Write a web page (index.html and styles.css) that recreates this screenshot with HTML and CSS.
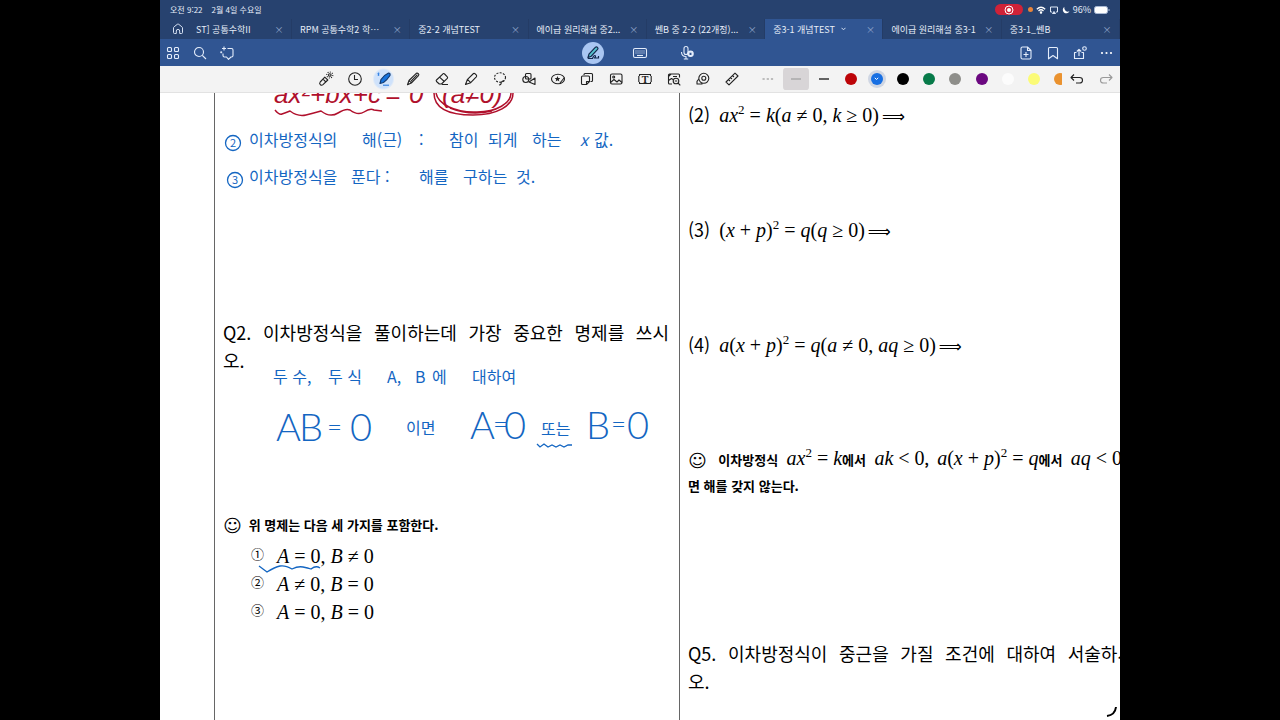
FILE: index.html
```html
<!DOCTYPE html>
<html lang="ko">
<head>
  <meta charset="utf-8">
  <title>중3-1 개념TEST</title>
  <link rel="stylesheet" href="styles.css">
</head>
<body>
<div class="screen">

  <header class="status">
    <span>오전 9:22</span>
    <span>2월 4일 수요일</span>
    <div class="status-right">
      <span class="rec"><svg width="10" height="10" viewBox="0 0 10 10"><circle cx="5" cy="5" r="4" fill="none" stroke="#fff"/><circle cx="5" cy="5" r="2" fill="#fff"/></svg></span>
      <span class="mic-dot"></span>
      <svg width="10" height="8" viewBox="0 0 10 8" fill="none" stroke="#fff" stroke-width="1.3"><path d="M.8 3.2Q5-.8 9.200 3.200M2.500 5Q5 2.600 7.500 5"/><circle cx="5" cy="6.600" r=".6" fill="#fff"/></svg>
      <svg width="10" height="8" viewBox="0 0 10 8" fill="none" stroke="#dfe8f7"><path d="M3 6H1.500V1H8.500V6H7"/><path d="M3.500 7.500L5 5.500L6.500 7.500z" fill="#dfe8f7"/></svg>
      <svg width="8" height="8" viewBox="0 0 8 8" fill="#fff"><path d="M2.500.8A3.500 3.500 0 1 0 7.500 5.200A3.600 3.600 0 0 1 2.500.8z"/></svg>
      <span>96%</span>
      <svg width="16" height="8" viewBox="0 0 16 8"><rect x=".5" y=".5" width="13" height="7" rx="2" fill="#fff" stroke="#a9b9d4"/><path d="M15 3v2" stroke="#a9b9d4"/></svg>
    </div>
  </header>

  <nav class="tabs">
    <button class="home" aria-label="홈"><svg width="12" height="12" viewBox="0 0 12 12" fill="none" stroke="#d5e0f2"><path d="M1.500 5Q1.500 4.300 2.100 3.800L5.300 1.300Q6 .8 6.700 1.300L9.900 3.800Q10.500 4.300 10.500 5V9.500Q10.500 10.500 9.500 10.500H7.700V8Q7.700 6.400 6 6.400Q4.300 6.400 4.300 8V10.500H2.500Q1.500 10.500 1.500 9.500z"/></svg></button>
    <div class="tab tab-cut"><button class="tab-name">ST] 공통수학II</button><button class="close" aria-label="닫기">×</button></div>
    <div class="tab"><button class="tab-name">RPM 공통수학2 학⋯</button><button class="close" aria-label="닫기">×</button></div>
    <div class="tab"><button class="tab-name">중2-2 개념TEST</button><button class="close" aria-label="닫기">×</button></div>
    <div class="tab"><button class="tab-name">에이급 원리해설 중2...</button><button class="close" aria-label="닫기">×</button></div>
    <div class="tab"><button class="tab-name">쎈B 중 2-2 (22개정)...</button><button class="close" aria-label="닫기">×</button></div>
    <div class="tab active"><button class="tab-name">중3-1 개념TEST <svg width="5" height="4" viewBox="0 0 5 4" fill="none" stroke="#d5e0f2"><path d="M.5.8L2.500 2.800L4.500.8"/></svg></button><button class="close" aria-label="닫기">×</button></div>
    <div class="tab"><button class="tab-name">에이급 원리해설 중3-1</button><button class="close" aria-label="닫기">×</button></div>
    <div class="tab"><button class="tab-name">중3-1_쎈B</button><button class="close" aria-label="닫기">×</button></div>
  </nav>

  <div class="navbar">
    <div class="nav-left">
      <button aria-label="페이지"><svg class="ico" viewBox="0 0 16 16"><rect x="2.500" y="2.500" width="4" height="4" rx="1"/><rect x="9.500" y="2.500" width="4" height="4" rx="1"/><rect x="2.500" y="9.500" width="4" height="4" rx="1"/><rect x="9.500" y="9.500" width="4" height="4" rx="1"/></svg></button>
      <button aria-label="검색"><svg class="ico" viewBox="0 0 16 16"><circle cx="7" cy="7" r="4.500"/><path d="M10.300 10.300L14 14"/></svg></button>
      <button aria-label="AI"><svg class="ico" viewBox="0 0 16 16"><path d="M8.500 3.500H12.500Q14 3.500 14 5V10.500Q14 12 12.500 12H12L9.500 14.300L7.500 12H5.500Q4 12 4 10.500V8.500M5 1.500V5.500M3 3.500H7M2.200 6.200V8.200M1.200 7.200H3.200"/></svg></button>
    </div>
    <div class="nav-mid">
      <button class="pen-mode" aria-label="필기"><svg width="16" height="16" viewBox="0 0 16 16" fill="none" stroke="#12294d" stroke-width="1.200"><path d="M3 12.500L4 9L10.500 2.200Q11.500 1.400 12.500 2.400Q13.500 3.400 12.600 4.400L6.200 11.200z" fill="#58c3cf"/><path d="M3 13.500H7.500Q9 9.500 10.500 11Q11 12 9 13H13.500V11"/></svg></button>
      <button aria-label="키보드"><svg class="ico" viewBox="0 0 16 16"><rect x="1.500" y="3.500" width="13" height="9" rx="1.500"/><path d="M3.500 6H12.500M3.500 8H12.500" stroke-dasharray="1 1"/><path d="M5 10.500H11"/></svg></button>
      <button aria-label="녹음"><svg class="ico" viewBox="0 0 16 16"><rect x="5" y="1.500" width="4" height="8" rx="2"/><path d="M2.500 7Q2.500 11.500 7 11.500V14M4.800 14H9.200"/><circle cx="11.500" cy="8.800" r="2.700" fill="#e4edfb"/><path d="M10.600 7.900L12.400 9.700M12.400 7.900L10.600 9.700" stroke="#305592"/></svg></button>
    </div>
    <div class="nav-right">
      <button aria-label="페이지 추가"><svg class="ico" viewBox="0 0 16 16"><path d="M4.500 2H9.500L13 5.500V12.500Q13 14 11.500 14H4.500Q3 14 3 12.500V3.500Q3 2 4.500 2zM9.500 2V5.500H13M8 7V12M5.500 9.500H10.500"/></svg></button>
      <button aria-label="책갈피"><svg class="ico" viewBox="0 0 16 16"><path d="M3.500 3.500Q3.500 2.500 4.500 2.500H11.500Q12.500 2.500 12.500 3.500V13.800L8 10.500L3.500 13.800z"/></svg></button>
      <button aria-label="공유"><svg class="ico" viewBox="0 0 16 16"><path d="M4.500 7.500H2.500V13.500H11.500V7.500H9.500M7 11V4.500M4.800 6.500L7 4.300L9.200 6.500"/><circle cx="12.500" cy="3.500" r="1.800"/></svg></button>
      <button aria-label="더보기"><svg width="16" height="16" viewBox="0 0 16 16" fill="#fff"><circle cx="3" cy="8" r="1.100"/><circle cx="7.500" cy="8" r="1.100"/><circle cx="12" cy="8" r="1.100"/></svg></button>
    </div>
  </div>

  <div class="toolbar">
    <div class="tools">
      <button aria-label="레이저"><svg class="ico" viewBox="0 0 16 16"><path d="M2.200 11L6.800 6.200L9.800 9L5 13.700Q3.600 14.900 2.300 13.600Q1 12.300 2.200 11zM5 8.200L7.900 11"/><circle cx="11.800" cy="4" r="1.300"/><circle cx="11.800" cy="4" r="3" stroke-dasharray="1 1.300"/></svg></button>
      <button aria-label="최근"><svg class="ico" viewBox="0 0 16 16"><circle cx="8" cy="8" r="6.300"/><path d="M7.500 4V8.500H11"/></svg></button>
      <button class="tool-on" aria-label="펜"><svg class="ico" viewBox="0 0 16 16"><path d="M4 12.500L5 8.500Q8 4 12.500 2Q14.500 2 14 4.500Q11.500 8.500 7.500 11.500z" fill="#1673dd" stroke="#123a70"/><path d="M2.500 1.500V5M1.500 2.500L3.500 4M3.500 2.300L1.500 4" stroke="#2a7be0" stroke-width=".8"/><path d="M7 14.200H13" stroke="#2a7be0"/></svg></button>
      <button aria-label="연필"><svg class="ico" viewBox="0 0 16 16"><path d="M2.500 13.800L4 9.500L11.300 2.300Q12.300 1.700 13.300 2.700Q14.300 3.700 13.500 4.700L6.300 12zM4 9.500L6.300 12M5.800 10.300L12.400 3.700"/></svg></button>
      <button aria-label="지우개"><svg class="ico" viewBox="0 0 16 16"><path d="M2.500 9L9 2.800Q9.800 2.200 10.600 3L13.300 5.800Q14 6.600 13.300 7.400L7.500 13H5.300L2.500 10.500Q1.800 9.700 2.500 9zM5.500 6.200L10.300 10.500M8 13.500H14"/></svg></button>
      <button aria-label="형광펜"><svg class="ico" viewBox="0 0 16 16"><path d="M2.500 13.500L4.500 8.300L10.500 2.500Q11.300 2 12.200 2.900L13.400 4.200Q14 5 13.300 5.800L7.700 11.700zM4.500 8.300L7.700 11.700M2.500 13.500L7.700 11.700"/></svg></button>
      <button aria-label="올가미"><svg class="ico" viewBox="0 0 16 16"><ellipse cx="8" cy="6.500" rx="5.500" ry="4.700" stroke-dasharray="2 1.300"/><path d="M12.500 9.500Q10 10 9 11.500Q9.800 13.500 7 14"/></svg></button>
      <button aria-label="도형"><svg class="ico" viewBox="0 0 16 16"><circle cx="4.800" cy="8.500" r="3"/><rect x="4.500" y="2.500" width="5.500" height="5.500" rx="1"/><path d="M8 11L14 7V13.500z"/></svg></button>
      <button aria-label="스티커"><svg class="ico" viewBox="0 0 16 16"><ellipse cx="8" cy="8" rx="6.500" ry="4.800"/><path d="M7.500 5L8.300 7L10.300 7.100L8.800 8.400L9.300 10.400L7.500 9.300L5.700 10.400L6.200 8.400L4.700 7.100L6.700 7z" fill="#222" stroke="none"/><path d="M10 12L14.500 6.500" /></svg></button>
      <button aria-label="포스트잇"><svg class="ico" viewBox="0 0 16 16"><path d="M5 4V3.500Q5 2.500 6 2.500H12.500Q13.500 2.500 13.500 3.500V9.500Q13.500 10.500 12.500 10.500H11.500M3.500 5H9.500Q10.500 5 10.500 6V10.500L7.500 13.500H3.500Q2.500 13.500 2.500 12.500V6Q2.500 5 3.500 5zM10.500 10.500H7.500V13.500"/></svg></button>
      <button aria-label="사진"><svg class="ico" viewBox="0 0 16 16"><rect x="2.500" y="3" width="11.500" height="10" rx="1.500"/><circle cx="5.700" cy="6" r="1"/><path d="M2.500 11.500L6 8.500L9 11L11 9L14 11.500"/></svg></button>
      <button aria-label="텍스트"><svg class="ico" viewBox="0 0 16 16"><path d="M2.500 5V3.500H13.500V5M2.500 11V12.500H13.500V11M1.800 5V11M14.200 5V11"/><text class="ico-t" x="8" y="11.500">T</text></svg></button>
      <button aria-label="이미지 검색"><svg class="ico" viewBox="0 0 16 16"><path d="M6 13H3.500Q2.500 13 2.500 12V4Q2.500 3 3.500 3H12.500Q13.500 3 13.500 4V6.500M2.500 9.500L5.500 7.500L7 8.500M2.500 5.500L5 3M7 5.500H11"/><circle cx="10" cy="10" r="2.800"/><path d="M12 12L14.300 14.300M8.800 10H11.200"/></svg></button>
      <button aria-label="테이프"><svg class="ico" viewBox="0 0 16 16"><circle cx="8.800" cy="7.300" r="5"/><circle cx="8.800" cy="7.300" r="2"/><path d="M3.800 8L2 10.300V13H7V12"/></svg></button>
      <button aria-label="자"><svg class="ico" viewBox="0 0 16 16"><path d="M2 11L11 2.200L14 5L5 13.800zM4.500 8.600L6 10M6.500 6.600L8 8M8.500 4.600L10 6"/></svg></button>
    </div>
    <div class="palette">
      <button aria-label="점선"><svg class="ico" viewBox="0 0 16 16"><path d="M2.500 8H13.500" stroke="#888" stroke-dasharray="2.200 2"/></svg></button>
      <button class="stroke-on" aria-label="얇은 선"><svg class="ico" viewBox="0 0 16 16"><path d="M3 8H13" stroke="#999"/></svg></button>
      <button aria-label="굵은 선"><svg class="ico" viewBox="0 0 16 16"><path d="M3 8H13" stroke="#333" stroke-width="1.500"/></svg></button>
      <button aria-label="빨강"><i class="swatch red"></i></button>
      <button aria-label="파랑"><i class="swatch blue"><svg width="5" height="4" viewBox="0 0 5 4" fill="none" stroke="#fff"><path d="M.8.8L2.500 2.500L4.200.8"/></svg></i></button>
      <button aria-label="검정"><i class="swatch black"></i></button>
      <button aria-label="초록"><i class="swatch green"></i></button>
      <button aria-label="회색"><i class="swatch gray"></i></button>
      <button aria-label="보라"><i class="swatch purple"></i></button>
      <button aria-label="흰색"><i class="swatch white"></i></button>
      <button aria-label="노랑"><i class="swatch yellow"></i></button>
    </div>
    <button class="half" aria-label="주황"><i class="swatch orange"></i></button>
    <div class="history">
      <button aria-label="실행 취소"><svg class="ico" viewBox="0 0 16 16"><path d="M5 3.500L2 6.500L5 9.500M2.300 6.500H10.500Q13.500 6.500 13.500 9.200Q13.500 12 10.500 12H7"/></svg></button>
      <button aria-label="다시 실행"><svg class="ico dim" viewBox="0 0 16 16"><path d="M11 3.500L14 6.500L11 9.500M13.700 6.500H5.500Q2.500 6.500 2.500 9.200Q2.500 12 5.500 12H9"/></svg></button>
    </div>
  </div>

  <main class="doc">
    <div class="gutter"></div>
    <section class="col col-left">
      <p class="question"><span class="full">Q2. 이차방정식을 풀이하는데 가장 중요한 명제를 쓰시</span>오.</p>
      <p class="note note-left"><span class="smile">☺</span> 위 명제는 다음 세 가지를 포함한다.</p>
      <ul class="cases">
        <li><span class="num">①</span><span class="math"><i>A</i><b>=</b>0, <i>B</i><b>≠</b>0</span></li>
        <li><span class="num">②</span><span class="math"><i>A</i><b>≠</b>0, <i>B</i><b>=</b>0</span></li>
        <li><span class="num">③</span><span class="math"><i>A</i><b>=</b>0, <i>B</i><b>=</b>0</span></li>
      </ul>
    </section>
    <section class="col col-right">
      <p class="item">(2) <span class="math"><i>ax</i><sup>2</sup><b>=</b><i>k</i>(<i>a</i><b>≠</b>0, <i>k</i><b>≥</b>0)<em>⟹</em></span></p>
      <p class="item">(3) <span class="math">(<i>x</i><b>+</b><i>p</i>)<sup>2</sup><b>=</b><i>q</i>(<i>q</i><b>≥</b>0)<em>⟹</em></span></p>
      <p class="item">(4) <span class="math"><i>a</i>(<i>x</i><b>+</b><i>p</i>)<sup>2</sup><b>=</b><i>q</i>(<i>a</i><b>≠</b>0, <i>aq</i><b>≥</b>0)<em>⟹</em></span></p>
      <p class="note note-right"><span class="full"><span class="smile">☺</span> 이차방정식 <span class="math"><i>ax</i><sup>2</sup><b>=</b><i>k</i></span>에서 <span class="math"><i>ak</i><b>&lt;</b>0</span>, <span class="math"><i>a</i>(<i>x</i><b>+</b><i>p</i>)<sup>2</sup><b>=</b><i>q</i></span>에서 <span class="math"><i>aq</i><b>&lt;</b>0</span>이</span>면 해를 갖지 않는다.</p>
      <p class="question"><span class="full">Q5. 이차방정식이 중근을 가질 조건에 대하여 서술하시</span>오.</p>
    </section>

    <!-- pen strokes and handwriting on top of the page -->
    <svg class="ink" width="984" height="627" viewBox="160 93 984 627">
      <g class="red-ink">
        <text x="274" y="103">ax²+bx+c</text>
        <text x="385" y="103">=</text>
        <text x="409" y="103">0</text>
        <text x="442" y="103">(a≠0)</text>
        <path d="M275 110Q279 115 282 114T290 111Q298 117 306 115T321 111Q330 118 338 113T350 110Q358 116 364 112T374 110L382 111"/>
        <path d="M434 93C434 108 448 115 473 115C497 115 513 106 513 93M436 93C438 104 455 113 477 112C497 112 511 103 511 93M450 108Q470 116 492 111" stroke-width="1.500"/>
      </g>
      <g class="blue-ink">
        <circle cx="233" cy="143" r="7.500"/><text class="tiny" x="233" y="147">2</text>
        <text x="249" y="146">이차방정식의</text>
        <text x="362" y="146">해(근)</text>
        <text x="419" y="146">:</text>
        <text x="449" y="146">참이</text>
        <text x="488" y="146">되게</text>
        <text x="532" y="146">하는</text>
        <text class="var" x="580" y="146">x</text>
        <text x="594" y="146">값.</text>
        <circle cx="235" cy="180" r="7.500"/><text class="tiny" x="235" y="184">3</text>
        <text x="249" y="183">이차방정식을</text>
        <text x="351" y="183">푼다 :</text>
        <text x="419" y="183">해를</text>
        <text x="463" y="183">구하는</text>
        <text x="516" y="183">것.</text>
        <text x="273" y="383">두 수,</text>
        <text x="328" y="383">두 식</text>
        <text x="387" y="383">A,</text>
        <text x="415" y="383">B</text>
        <text x="432" y="383">에</text>
        <text x="472" y="383">대하여</text>
        <text class="big" x="276" y="441">A</text>
        <text class="big" x="299" y="441">B</text>
        <text class="eq" x="327" y="436">=</text>
        <text class="big" x="350" y="441">0</text>
        <text x="406" y="434">이면</text>
        <text class="big" x="470" y="439">A</text>
        <text class="eq" x="493" y="433">=</text>
        <text class="big" x="504" y="439">0</text>
        <text x="541" y="435">또는</text>
        <text class="big" x="586" y="439">B</text>
        <text class="eq" x="611" y="433">=</text>
        <text class="big" x="627" y="439">0</text>
        <path d="M537 444L540 447L544 444L548 447L552 445L556 447L560 445L564 447L568 445L572 445"/>
        <path d="M259 566L267 572Q275 567 280 566T292 569Q298 566 303 567T311 569Q316 565 320 568"/>
      </g>
      <path d="M1116 707Q1115 715 1107 716" fill="none" stroke="#000" stroke-width="2"/>
    </svg>
  </main>
</div>
</body>
</html>
```

FILE: styles.css
```css
* {
  box-sizing: border-box;
}
body {
  margin: 0;
  background: #000;
  font-family: "Noto Sans CJK KR", "Noto Sans", sans-serif;
}
button {
  display: flex;
  align-items: center;
  justify-content: center;
  padding: 0;
  border: 0;
  background: none;
  color: inherit;
  font: inherit;
}
p, ul {
  margin: 0;
  padding: 0;
}
svg {
  flex: none;
}
.screen {
  display: flex;
  flex-direction: column;
  width: 75%;
  height: 100vh;
  margin: 0 auto;
  overflow: hidden;
  background: #fff;
}

/* status bar */
.status {
  display: flex;
  align-items: center;
  flex: none;
  gap: 9px;
  height: 19px;
  padding: 0 10px;
  background: #27426f;
  color: #e6edf8;
  font-size: 8px;
}
.status-right {
  display: flex;
  align-items: center;
  gap: 3px;
  margin-left: auto;
  font-size: 9px;
}
.rec {
  display: flex;
  align-items: center;
  justify-content: center;
  width: 28px;
  height: 11px;
  margin-right: 2px;
  border-radius: 6px;
  background: #cf2238;
}
.mic-dot {
  width: 5px;
  height: 5px;
  border-radius: 50%;
  background: #e8843a;
}

/* document tabs */
.tabs {
  display: flex;
  flex: none;
  height: 20px;
  background: #27426f;
  color: #e6edf8;
  font-size: 9px;
}
.home {
  width: 36px;
}
.tab {
  display: flex;
  align-items: center;
  justify-content: space-between;
  flex: 1;
  min-width: 0;
  padding: 0 8px;
  border-right: 1px solid #243c66;
  white-space: nowrap;
}
.tab-cut {
  flex: 0 0 96px;
  padding-left: 0;
}
.tab-name {
  gap: 6px;
}
.active {
  background: #305592;
}
.close {
  width: 8px;
  color: #94a8cd;
  font-size: 9px;
}

/* navigation bar */
.navbar {
  display: grid;
  grid-template-columns: 1fr auto 1fr;
  align-items: center;
  flex: none;
  height: 27px;
  background: #305592;
}
.nav-left, .nav-mid, .nav-right {
  display: flex;
  align-items: center;
}
.nav-left {
  gap: 11px;
  padding-left: 5px;
}
.nav-mid {
  gap: 25px;
}
.nav-mid button {
  width: 22px;
  height: 22px;
}
.nav-mid .pen-mode {
  border-radius: 50%;
  background: #a9c6f2;
}
.nav-right {
  justify-content: flex-end;
  gap: 11px;
  padding-right: 5px;
}
.ico {
  width: 16px;
  height: 16px;
  fill: none;
  stroke: #222;
  stroke-width: 1.1;
  stroke-linejoin: round;
  stroke-linecap: butt;
}
.navbar .ico {
  stroke: #e4edfb;
}
.ico-t {
  fill: #222;
  stroke: none;
  font: bold 10px "Liberation Serif", serif;
  text-anchor: middle;
}
.toolbar .dim {
  stroke: #999;
}

/* pen toolbar */
.toolbar {
  display: flex;
  align-items: center;
  flex: none;
  height: 27px;
  padding-left: 151px;
  border-bottom: 1px solid #e2e2e2;
  background: #f3f3f3;
}
.tools {
  display: flex;
  margin-right: 9px;
}
.tools button, .history button {
  width: 29px;
  height: 22px;
}
.tools .tool-on {
  background: radial-gradient(circle, #cfe2fb 9px, transparent 11px);
}
.palette {
  display: flex;
  flex: 1;
}
.palette button {
  flex: 1;
  height: 22px;
}
.palette .stroke-on {
  border-radius: 4px;
  background: #d8d5d7;
  background-clip: padding-box;
  border: solid transparent;
  border-width: 0 2px;
}
.swatch {
  display: flex;
  align-items: center;
  justify-content: center;
  flex: none;
  width: 12px;
  height: 12px;
  border-radius: 50%;
}
.red { background: #bd0408; }
.blue {
  background: #176fe3;
  box-shadow: 0 0 0 3px #cfd6e3;
}
.black { background: #000; }
.green { background: #077a49; }
.gray { background: #8e8e8a; }
.purple { background: #6b0880; }
.white { background: #fcfcfc; }
.yellow { background: #fbfb77; }
.orange { background: #ea922f; }
.half {
  justify-content: flex-end;
  width: 15px;
  overflow: hidden;
}
.half .swatch {
  margin-right: -4px;
}
.history {
  display: flex;
}

/* worksheet page */
.doc {
  position: relative;
  display: grid;
  grid-template-columns: 54px 465px 465px;
  flex: 1;
  min-height: 0;
  overflow: hidden;
  color: #000;
}
.col {
  padding: 0 10px 0 8px;
  border-left: 1px solid #666;
}
.col-left {
  padding-top: 225px;
}
.col-right {
  padding-top: 7px;
}
.question {
  font-size: 18px;
  line-height: 28px;
}
.full {
  display: block;
  text-align: justify;
  text-align-last: justify;
  white-space: nowrap;
}
.note {
  font-size: 13px;
  font-weight: bold;
  line-height: 26px;
  white-space: nowrap;
}
.note-left {
  margin-top: 138px;
}
.note-right {
  margin-bottom: 140px;
}
.smile {
  display: inline-block;
  width: 22px;
  font: 18px/20px "DejaVu Sans", sans-serif;
  text-align: left;
  text-align-last: left;
  vertical-align: middle;
}
.cases {
  margin-top: 4px;
  padding-left: 28px;
  list-style: none;
}
.cases li {
  display: flex;
  height: 28px;
  line-height: 28px;
}
.num {
  width: 26px;
  font-size: 13px;
  line-height: 24px;
}
.item {
  height: 28px;
  margin-bottom: 87px;
  font-size: 18px;
  line-height: 28px;
  white-space: nowrap;
}
.math {
  font-family: "Liberation Serif", serif;
  font-size: 20px;
  font-weight: normal;
}
.item .math {
  margin-left: 4px;
}
.math b {
  margin: 0 5px;
  font-weight: normal;
}
.math em {
  margin-left: 3px;
  font: 16px "DejaVu Sans", sans-serif;
}
.math sup {
  font-size: 13px;
  line-height: 0;
}

/* handwriting */
.ink {
  position: absolute;
  top: 0;
  left: 0;
}
.red-ink {
  fill: none;
  stroke: #b0102c;
  stroke-width: 1.5;
}
.red-ink text {
  fill: #b0102c;
  stroke: none;
  font: italic 26px "Liberation Sans", sans-serif;
}
.blue-ink {
  fill: none;
  stroke: #1466c2;
  stroke-width: 1.3;
}
.blue-ink text {
  fill: #1466c2;
  stroke: none;
  font-size: 16px;
}
.blue-ink .tiny {
  font-size: 11px;
  text-anchor: middle;
}
.blue-ink .var {
  font-style: italic;
}
.blue-ink .big {
  font-family: Lato, sans-serif;
  font-size: 38px;
  font-weight: 300;
}
.blue-ink .eq {
  font-family: Lato, sans-serif;
  font-size: 26px;
  font-weight: 300;
}
```
